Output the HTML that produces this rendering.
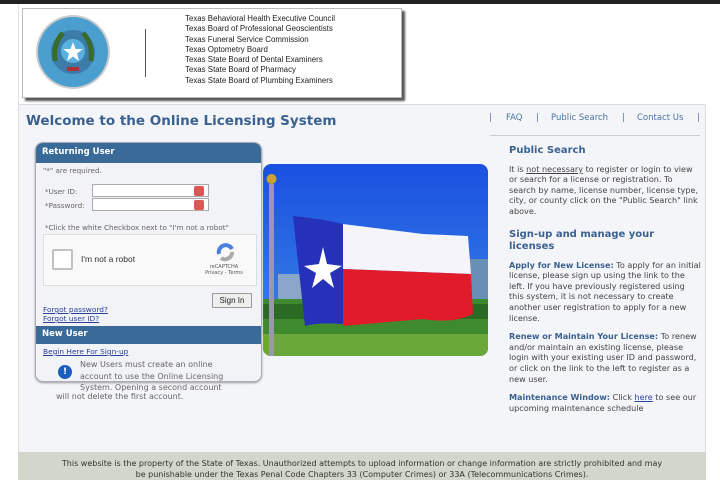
<!DOCTYPE html>
<html><head><meta charset="utf-8"><style>
*{margin:0;padding:0;box-sizing:border-box}
body{width:720px;height:480px;background:#fff;font-family:"DejaVu Sans","Liberation Sans",sans-serif;position:relative;overflow:hidden;color:#555}
.a{position:absolute}
.hdr{left:22px;top:8px;width:380px;height:90px;background:#fff;border:1px solid #bbb;box-shadow:3px 3px 2px #555}
.orgs{left:185px;top:14px;font-family:"Liberation Sans",sans-serif;font-size:7.9px;line-height:10.3px;color:#222}
.main{left:18px;top:104px;width:688px;height:349px;background:#f4f5f9;border-left:1px solid #ddd;border-right:1px solid #ddd;border-top:1px solid #ddd}
.foot{left:18px;top:452px;width:688px;height:28px;background:#d3d7cb;font-size:8px;text-align:center;color:#333;line-height:11px;padding-top:6px}
h1{position:absolute;left:26px;top:113px;font-size:13.5px;color:#3a6190;font-weight:bold}
.nav{top:113px;font-size:8.5px;color:#4b73a0}
.login{left:35px;top:142px;width:227px;height:240px;border:1px solid #aab;border-radius:8px;background:#f2f3f6;overflow:hidden;box-shadow:0 1px 2px #999}
.bar{background:#3a6a98;color:#fff;font-weight:bold;font-size:8.5px;padding:4px 6px;height:20px}
.s{font-size:7.2px;color:#666}
.inp{background:#fff;border:1px solid #aaa;height:13px;width:117px}
.red{position:absolute;right:4px;top:1px;width:10px;height:10px;background:#d55;border-radius:2px}
.lnk{color:#2a3f9a;text-decoration:underline;font-size:7.4px}
.r{left:509px;font-size:8.1px;line-height:10.6px;color:#444;width:192px}
.r b{color:#3a6190}
.h2{font-weight:bold;color:#3a6190;font-size:10px;font-family:"DejaVu Sans",sans-serif}
</style></head><body>
<div class="a" style="left:0;top:0;width:720px;height:4px;background:#222"></div>
<div class="a" style="left:18px;top:4px;width:1px;height:100px;background:#e4e4e4"></div>
<div class="a hdr">
 <svg class="a" style="left:10px;top:4px" width="80" height="80"><circle cx="40" cy="39" r="37" fill="#ccc"/><circle cx="40" cy="39" r="35" fill="#4a9fcf"/><circle cx="40" cy="39" r="22" fill="#3b7da8"/><path d="M22 48 Q20 30 30 20 M58 48 Q60 30 50 20" stroke="#3a6b2a" stroke-width="5" fill="none"/><circle cx="40" cy="38" r="12" fill="#5ab0e0"/><polygon points="40,29 42.5,36 50,36 44,40.5 46,48 40,43.5 34,48 36,40.5 30,36 37.5,36" fill="#fff"/><rect x="34" y="54" width="12" height="4" fill="#a33"/></svg>
 <div class="a" style="left:122px;top:20px;width:1px;height:48px;background:#555"></div>
</div>
<div class="a orgs">Texas Behavioral Health Executive Council<br>Texas Board of Professional Geoscientists<br>Texas Funeral Service Commission<br>Texas Optometry Board<br>Texas State Board of Dental Examiners<br>Texas State Board of Pharmacy<br>Texas State Board of Plumbing Examiners</div>
<div class="a main"></div>
<h1>Welcome to the Online Licensing System</h1>
<div class="a nav" style="left:489px">|</div><div class="a nav" style="left:506px">FAQ</div><div class="a nav" style="left:536px">|</div><div class="a nav" style="left:551px">Public Search</div><div class="a nav" style="left:622px">|</div><div class="a nav" style="left:637px">Contact Us</div><div class="a nav" style="left:697px">|</div>
<div class="a" style="left:490px;top:135px;width:210px;height:1px;background:#ccc"></div>

<svg class="a" style="left:263px;top:164px" width="225" height="192" viewBox="0 0 225 192">
<defs><clipPath id="c"><rect width="225" height="192" rx="8"/></clipPath><linearGradient id="sk" x1="0" y1="0" x2="0" y2="1"><stop offset="0" stop-color="#1a4fe0"/><stop offset="1" stop-color="#3c8ae8"/></linearGradient></defs>
<g clip-path="url(#c)"><rect width="225" height="192" fill="url(#sk)"/>
<rect x="15" y="110" width="40" height="30" fill="#8aa6c8"/><rect x="205" y="95" width="20" height="40" fill="#6a8fb5"/>
<rect y="135" width="225" height="57" fill="#3f8a2f"/><rect y="170" width="225" height="22" fill="#6aa83a"/><rect y="140" width="225" height="15" fill="#2b6a25"/>
<path d="M30 52 Q60 55 80 60 L80 160 Q55 158 42 162 Z" fill="#2431b8"/>
<path d="M80 60 Q120 65 160 70 L205 72 L208 110 L80 105 Z" fill="#f4f4fa"/>
<path d="M80 105 L208 110 L210 150 Q190 160 160 155 L80 162 Z" fill="#e21b2a"/>
<polygon points="60,83 64,100 79,102 67,109 71,124 60,115 49,124 53,109 41,102 56,100" fill="#fff"/>
<rect x="6" y="20" width="5" height="172" fill="#99a"/><circle cx="8.5" cy="15" r="5" fill="#c9a330"/></g></svg>

<div class="a login">
 <div class="bar">Returning User</div>
 <div class="a s" style="left:7px;top:23px">"*" are required.</div>
 <div class="a s" style="left:9px;top:44px">*User ID:</div>
 <div class="a inp" style="left:56px;top:41px"><div class="red"></div></div>
 <div class="a s" style="left:9px;top:58px">*Password:</div>
 <div class="a inp" style="left:56px;top:55px"><div class="red"></div></div>
 <div class="a s" style="left:9px;top:80px">*Click the white Checkbox next to "I'm not a robot"</div>
 <div class="a" style="left:7px;top:91px;width:214px;height:52px;background:#f9f9f9;border:1px solid #ddd">
  <div class="a" style="left:8px;top:14px;width:21px;height:21px;background:#fff;border:2px solid #c1c1c1;border-radius:2px"></div>
  <div class="a" style="left:37px;top:19px;font-size:8.5px;color:#333;font-family:'Liberation Sans',sans-serif">I'm not a robot</div>
  <svg class="a" style="left:171px;top:7px" width="22" height="20"><path d="M4 12 A7 7 0 0 1 17 7" stroke="#4a7fe0" stroke-width="4" fill="none"/><path d="M17 10 A7 7 0 0 1 6 16" stroke="#aaa" stroke-width="4" fill="none"/></svg>
  <div class="a" style="left:160px;top:29px;font-size:5px;color:#555;text-align:center;width:40px">reCAPTCHA<br>Privacy - Terms</div>
 </div>
 <div class="a" style="left:176px;top:150px;width:40px;height:15px;border:1px solid #999;background:#eee;font-size:8px;color:#222;text-align:center;line-height:13px;font-family:'Liberation Sans',sans-serif">Sign In</div>
 <div class="a lnk" style="left:7px;top:162px">Forgot password?</div>
 <div class="a lnk" style="left:7px;top:171px">Forgot user ID?</div>
 <div class="a bar" style="left:0;top:183px;width:227px;height:18px;padding:3px 6px">New User</div>
 <div class="a lnk" style="left:7px;top:204px">Begin Here For Sign-up</div>
 <div class="a" style="left:22px;top:222px;width:14px;height:14px;border-radius:50%;background:#1a5fc0;color:#fff;font-size:9px;font-weight:bold;text-align:center;line-height:14px">!</div>
</div>
<div class="a s" style="left:80px;top:359px;font-size:8px;line-height:11.5px;width:160px">New Users must create an online account to use the Online Licensing System. Opening a second account</div>
<div class="a s" style="left:56px;top:392px;font-size:8px">will not delete the first account.</div>

<div class="a r" style="top:146px"><div class="h2">Public Search</div>
<div style="margin-top:7px">It is <u>not necessary</u> to register or login to view or search for a license or registration. To search by name, license number, license type, city, or county click on the "Public Search" link above.</div>
<div class="h2" style="margin-top:12px;line-height:12px">Sign-up and manage your licenses</div>
<div style="margin-top:7px"><b>Apply for New License:</b> To apply for an initial license, please sign up using the link to the left. If you have previously registered using this system, it is not necessary to create another user registration to apply for a new license.</div>
<div style="margin-top:8px"><b>Renew or Maintain Your License:</b> To renew and/or maintain an existing license, please login with your existing user ID and password, or click on the link to the left to register as a new user.</div>
<div style="margin-top:8px"><b>Maintenance Window:</b> Click <span class="lnk" style="font-size:8.1px">here</span> to see our upcoming maintenance schedule</div></div>

<div class="a foot">This website is the property of the State of Texas. Unauthorized attempts to upload information or change information are strictly prohibited and may<br>be punishable under the Texas Penal Code Chapters 33 (Computer Crimes) or 33A (Telecommunications Crimes).</div>
</body></html>
